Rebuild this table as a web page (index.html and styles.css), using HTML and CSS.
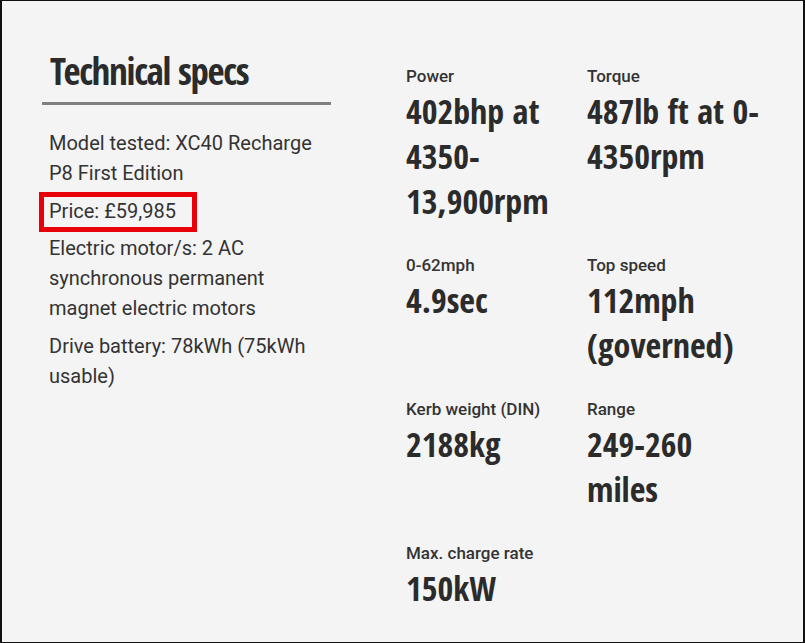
FILE: index.html
```html
<!DOCTYPE html>
<html lang="en">
<head>
<meta charset="utf-8">
<title>Technical specs</title>
<link rel="stylesheet" href="styles.css">
</head>
<body>
<div class="page">
  <section class="specs">
    <div class="specs-left">
      <h2 class="specs-title">Technical specs</h2>
      <ul class="spec-list">
        <li>Model tested: XC40 Recharge P8 First Edition</li>
        <li><span class="highlight">Price: £59,985</span></li>
        <li>Electric motor/s: 2 AC synchronous permanent magnet electric motors</li>
        <li>Drive battery: 78kWh (75kWh usable)</li>
      </ul>
    </div>
    <div class="specs-grid">
      <div class="stat"><div class="stat-label">Power</div><div class="stat-value">402bhp at 4350-13,900rpm</div></div>
      <div class="stat"><div class="stat-label">Torque</div><div class="stat-value">487lb ft at 0-4350rpm</div></div>
      <div class="stat"><div class="stat-label">0-62mph</div><div class="stat-value">4.9sec</div></div>
      <div class="stat"><div class="stat-label">Top speed</div><div class="stat-value">112mph (governed)</div></div>
      <div class="stat"><div class="stat-label">Kerb weight (DIN)</div><div class="stat-value">2188kg</div></div>
      <div class="stat"><div class="stat-label">Range</div><div class="stat-value">249-260 miles</div></div>
      <div class="stat"><div class="stat-label">Max. charge rate</div><div class="stat-value">150kW</div></div>
    </div>
  </section>
</div>
</body>
</html>
```
FILE: styles.css
```css
* { box-sizing: border-box; }
html, body { margin: 0; padding: 0; }
body {
  font-family: Roboto, "Liberation Sans", sans-serif;
  color: #333;
}
.page {
  width: 805px;
  height: 643px;
  background: #f4f4f4;
  border-style: solid;
  border-color: #111;
  border-width: 1px 2px 1px 2px;
  padding: 47px 0 0 40px;
}
.specs {
  display: flex;
  align-items: flex-start;
}
.specs-left {
  width: 289px;
  flex: none;
}
.specs-title {
  margin: 0;
  padding: 0 8px 8px;
  font-family: "Open Sans Condensed", "Open Sans", sans-serif;
  font-stretch: 75%;
  font-weight: 700;
  font-size: 37px;
  line-height: 46px;
  letter-spacing: -1.3px;
  color: #2b2b2b;
  border-bottom: 3px solid #808080;
}
.spec-list {
  list-style: none;
  margin: 23px 0 0;
  padding: 0 0 0 7px;
  font-size: 20px;
  line-height: 30px;
}
.spec-list li { margin-bottom: 7.5px; }
.highlight {
  position: relative;
}
.highlight::after {
  content: "";
  position: absolute;
  left: -10px;
  right: -21px;
  top: -7px;
  bottom: -9px;
  border: 5px solid #e8000b;
}
.specs-grid {
  margin-left: 75px;
  display: grid;
  grid-template-columns: 175px 175px;
  column-gap: 6px;
  row-gap: 29px;
  padding-top: 16px;
}
.stat-label {
  font-size: 17px;
  font-weight: 500;
  line-height: 24px;
}
.stat-value {
  margin-top: 1px;
  font-family: "Open Sans Condensed", "Open Sans", sans-serif;
  font-stretch: 75%;
  font-weight: 700;
  font-size: 34px;
  line-height: 45px;
  color: #2b2b2b;
}
```
